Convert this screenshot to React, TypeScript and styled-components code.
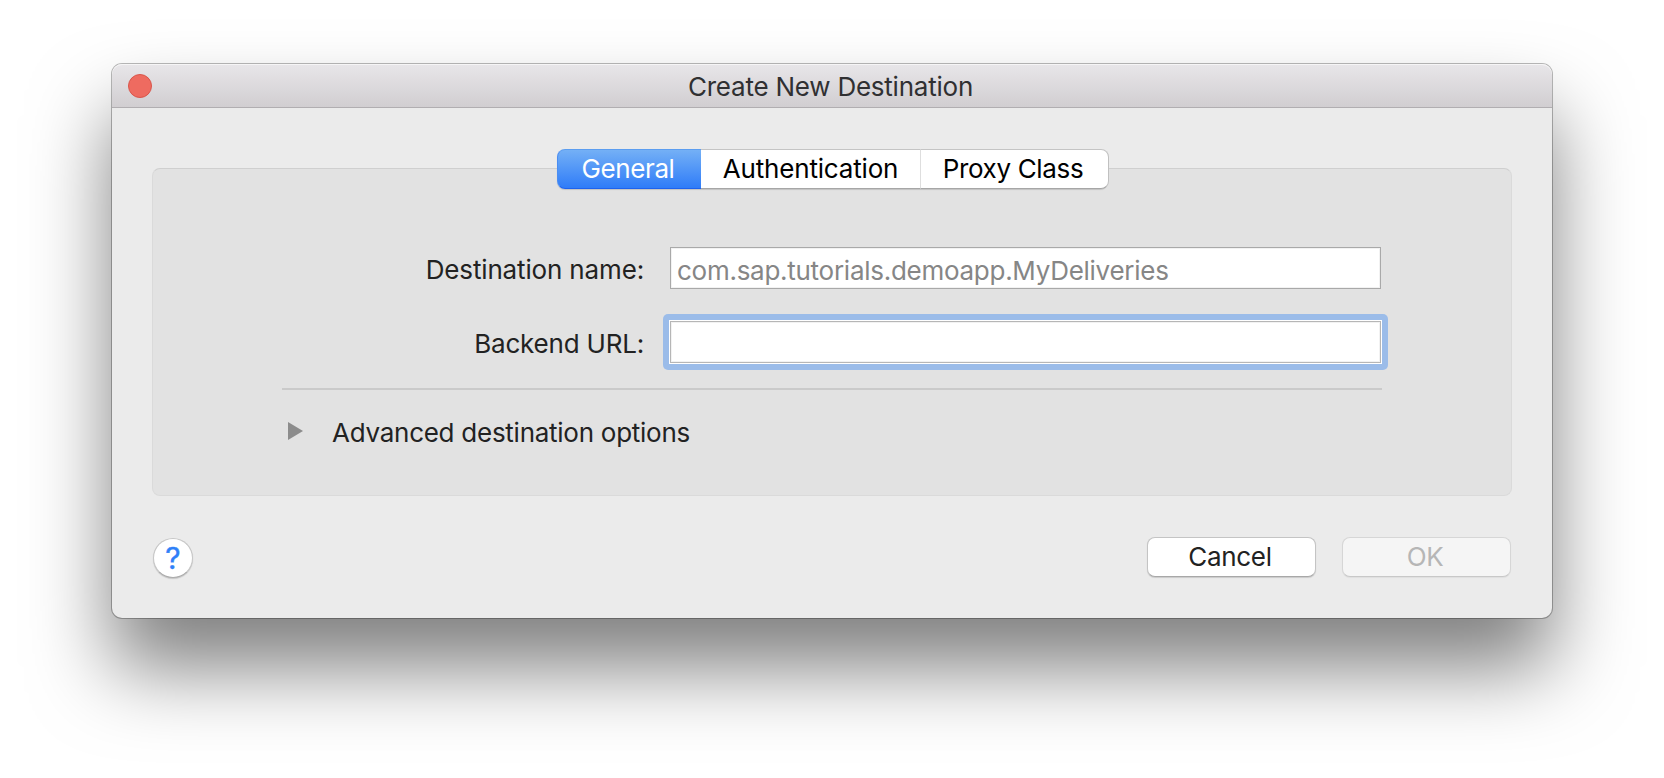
import React from 'react';
import styled, { createGlobalStyle, css } from 'styled-components';

const GlobalStyle = createGlobalStyle`
  *, *::before, *::after { box-sizing: border-box; }
  html, body { margin: 0; padding: 0; background: #fff; overflow: hidden; }
  body, button, input {
    font-family: Inter, "Liberation Sans", sans-serif;
    font-size: 26px;
    line-height: 32px;
    font-weight: 400;
  }
`;

const Desktop = styled.main`
  display: flex;
  justify-content: center;
  width: 1664px;
  height: 778px;
  padding-top: 64px;
  background: #fff;
`;

const Window = styled.section`
  display: flex;
  flex-direction: column;
  width: 1440px;
  height: 554px;
  border-radius: 10px;
  background: #ebebeb;
  box-shadow:
    0 0 0 1px rgba(0, 0, 0, 0.27),
    0 50px 80px rgba(0, 0, 0, 0.5);
`;

const TitleBar = styled.header`
  display: grid;
  grid-template-columns: 1fr auto 1fr;
  align-items: center;
  height: 44px;
  padding: 1px 16px 0;
  border-bottom: 1px solid #b1aeb1;
  border-radius: 10px 10px 0 0;
  background: linear-gradient(#e8e6e9, #d1ced1);
  box-shadow: inset 0 1px 0 #f6f5f6;
`;

const CloseButton = styled.button`
  width: 24px;
  height: 24px;
  margin-top: -1px;
  padding: 0;
  border: 1px solid #d9564b;
  border-radius: 50%;
  background: #ee6b60;
`;

const Title = styled.h1`
  margin: 0;
  padding: 2px 3px 0 0;
  font-size: 26px;
  font-weight: 400;
  letter-spacing: -0.23px;
  color: #303032;
`;

const Content = styled.div`
  display: flex;
  flex-direction: column;
  padding: 41px 40px 0;
`;

const TabList = styled.div`
  position: relative;
  z-index: 1;
  display: flex;
  align-self: center;
  width: 551px;
  height: 40px;
  margin: 0 0 -21px 1px;
  border-radius: 8px;
  box-shadow: 0 1px 1px rgba(0, 0, 0, 0.14);
`;

const Tab = styled.button<{ $width: number; $spacing: number; $active?: boolean }>`
  flex: none;
  width: ${(p) => p.$width}px;
  padding: 0;
  border: 1px solid #c4c4c4;
  border-left-width: 0;
  border-right-color: #dedede;
  border-bottom-color: #a6a6a6;
  background: #fff;
  color: #000;
  letter-spacing: ${(p) => p.$spacing}px;

  &:last-child {
    padding-right: 3px;
    border-right-color: #c0c0c0;
    border-radius: 0 8px 8px 0;
  }

  ${(p) =>
    p.$active &&
    css`
      padding-right: 3px;
      border-width: 1px 0 1px 1px;
      border-color: #5b9df0 #4a8df2 #1e62ee #4a8df2;
      border-radius: 8px 0 0 8px;
      background: linear-gradient(#74b0f6, #2f7cf8);
      color: #fff;
    `}
`;

const Panel = styled.div`
  height: 328px;
  padding: 78px 129px 0;
  border: 1px solid #dadada;
  border-top-color: #cfcfcf;
  border-radius: 8px;
  background: #e2e2e2;
`;

const Form = styled.div`
  display: grid;
  grid-template-columns: 362px 711px;
  column-gap: 26px;
  row-gap: 32px;
  align-items: center;
`;

const Label = styled.label<{ $spacing: number }>`
  padding-top: 3px;
  text-align: right;
  letter-spacing: ${(p) => p.$spacing}px;
  color: #222;
`;

const Field = styled.input`
  display: block;
  width: 711px;
  height: 42px;
  padding: 4px 6px 0;
  border: 1px solid #a9a9a9;
  border-radius: 0;
  outline: none;
  background: #fff;
  box-shadow: inset 0 0 0 1px #f2f2f2;
  letter-spacing: -0.27px;

  &::placeholder {
    color: #868686;
    opacity: 1;
  }
`;

const FocusRing = styled.div`
  margin: -7px;
  padding: 7px;
  border-radius: 5px;
  background: #9bbce9;

  ${Field} {
    border-color: #b6b6b6;
    box-shadow:
      inset 0 0 0 1px #f2f2f2,
      0 0 0 1px #fff;
  }
`;

const Divider = styled.hr`
  height: 2px;
  margin: 25px 0 0;
  border: 0;
  background: #cacaca;
`;

const Disclosure = styled.button`
  display: flex;
  align-items: center;
  gap: 29px;
  margin-top: 27px;
  padding: 0 0 0 6px;
  border: 0;
  background: none;
  color: #222;
  letter-spacing: -0.26px;
`;

const Triangle = styled.svg`
  display: block;
  margin-top: -4px;
`;

const Footer = styled.footer`
  display: flex;
  align-items: flex-start;
  gap: 26px;
  margin-top: 41px;
  padding-right: 1px;
`;

const HelpButton = styled.button`
  width: 40px;
  height: 40px;
  margin: 1px auto 0 1px;
  padding: 0;
  border: 1px solid #c6c6c6;
  border-bottom-color: #acacac;
  border-radius: 50%;
  background: #fff;
  box-shadow: 0 1px 1px rgba(0, 0, 0, 0.16);
  font-size: 30px;
  color: #2f80f8;
  -webkit-text-stroke: 0.4px #2f80f8;
`;

const PushButton = styled.button`
  width: 169px;
  height: 40px;
  padding: 0 3px 0 0;
  border: 1px solid #c4c4c4;
  border-bottom-color: #a8a8a8;
  border-radius: 8px;
  background: #fff;
  box-shadow: 0 1px 1px rgba(0, 0, 0, 0.14);
  color: #222;
  letter-spacing: -0.3px;

  &:disabled {
    border-color: #d6d6d6;
    border-bottom-color: #c8c8c8;
    background: #f5f5f5;
    box-shadow: 0 1px 1px rgba(0, 0, 0, 0.05);
    color: #b6b6b6;
  }
`;

export default function App() {
  return (
    <Desktop>
      <GlobalStyle />
      <Window>
        <TitleBar>
          <CloseButton aria-label="Close" />
          <Title>Create New Destination</Title>
        </TitleBar>
        <Content>
          <TabList>
            <Tab $width={144} $spacing={-0.4} $active>General</Tab>
            <Tab $width={220} $spacing={-0.17}>Authentication</Tab>
            <Tab $width={188} $spacing={-0.35}>Proxy Class</Tab>
          </TabList>
          <Panel>
            <Form>
              <Label htmlFor="name" $spacing={-0.15}>Destination name:</Label>
              <Field id="name" placeholder="com.sap.tutorials.demoapp.MyDeliveries" />
              <Label htmlFor="url" $spacing={-0.2}>Backend URL:</Label>
              <FocusRing>
                <Field id="url" />
              </FocusRing>
            </Form>
            <Divider />
            <Disclosure>
              <Triangle width="15" height="18" viewBox="0 0 15 18">
                <path d="M0 0L15 9L0 18Z" fill="#8c8c8c" />
              </Triangle>
              Advanced destination options
            </Disclosure>
          </Panel>
          <Footer>
            <HelpButton aria-label="Help">?</HelpButton>
            <PushButton>Cancel</PushButton>
            <PushButton disabled>OK</PushButton>
          </Footer>
        </Content>
      </Window>
    </Desktop>
  );
}
